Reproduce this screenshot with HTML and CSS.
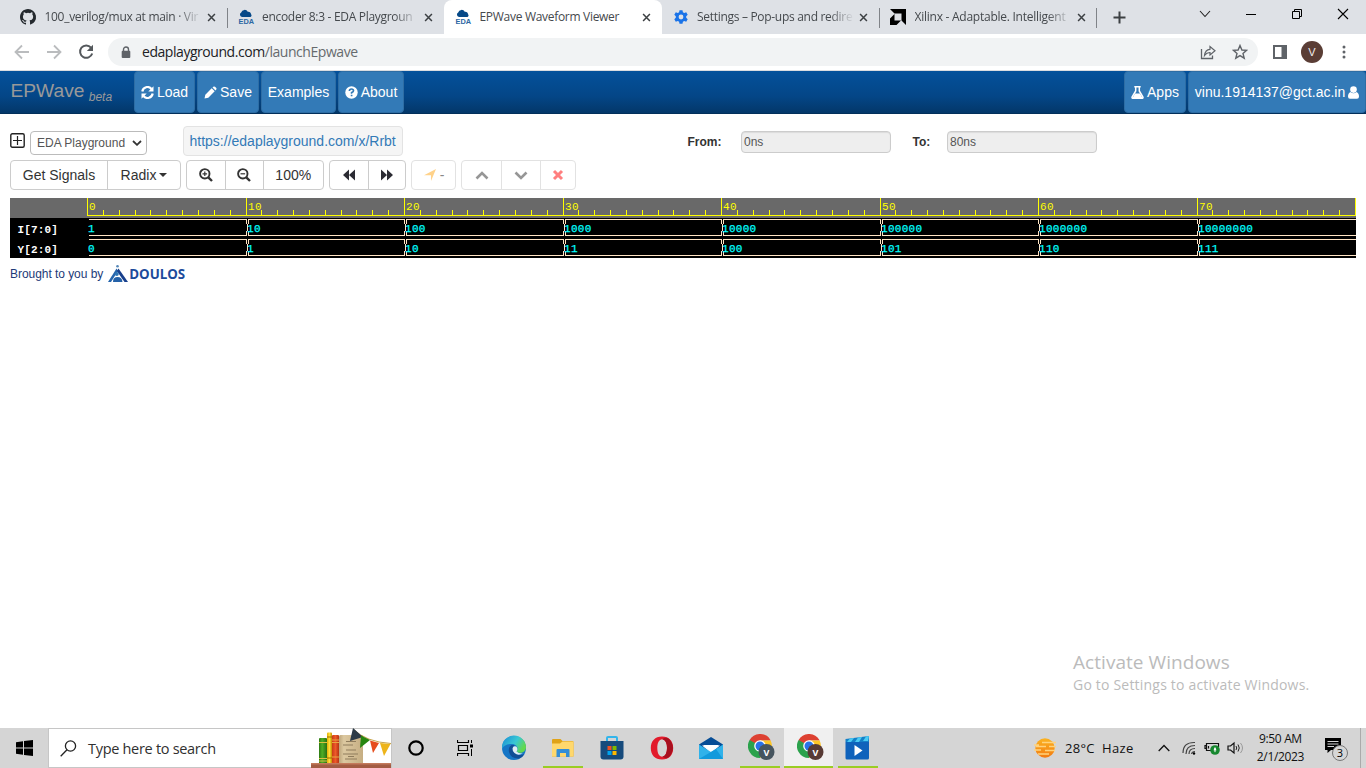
FILE: index.html
```html
<!DOCTYPE html>
<html lang="en">
<head>
<meta charset="utf-8">
<title>EPWave Waveform Viewer</title>
<link rel="stylesheet" href="styles.css">
</head>
<body>
<svg class="defs" width="18" height="18" aria-hidden="true">
  <symbol id="x" viewBox="0 0 10 10"><path d="M1.2 1.2L8.8 8.8M8.8 1.2L1.2 8.8" stroke="#3c4043" stroke-width="1.7" fill="none"/></symbol>
  <symbol id="cloud" viewBox="0 0 18 18">
    <path d="M4.5 9A2.8 2.8 0 0 1 3.6 3.8A4 4 0 0 1 11 3.2A3 3 0 0 1 14.7 6A1.8 1.8 0 0 1 14 9Z" fill="#064988"/>
  </symbol>
  <symbol id="chrome" viewBox="0 0 28 28">
    <path d="M12 6.5H22.6L22.4 6A12 12 0 0 0 1.6 6L6.9 14.5Z" fill="#dd4132"/>
    <path d="M12 12L1.6 6A12 12 0 0 0 12 24L17 15Z" fill="#2ba24c"/>
    <path d="M16.8 14.8L12 24A12 12 0 0 0 22.6 6.5H12Z" fill="#fcc626"/>
    <circle cx="12" cy="12" r="5.8" fill="#fff"/><circle cx="12" cy="12" r="4.5" fill="#2972e8"/>
  </symbol>
</svg>

<header class="tabs">
  <div class="tab"><svg class="fav" viewBox="0 0 16 16"><path fill="#24292e" d="M8 0C3.58 0 0 3.58 0 8c0 3.54 2.29 6.53 5.47 7.59.4.07.55-.17.55-.38v-1.49c-2.01.37-2.53-.49-2.69-.94-.09-.23-.48-.94-.82-1.13-.28-.15-.68-.52-.01-.53.63-.01 1.08.58 1.23.82.72 1.21 1.87.87 2.33.66.07-.52.28-.87.51-1.07-1.78-.2-3.64-.89-3.64-3.95 0-.87.31-1.59.82-2.15-.08-.2-.36-1.02.08-2.12 0 0 .67-.21 2.2.82a7.4 7.4 0 0 1 4 0c1.53-1.04 2.2-.82 2.2-.82.44 1.1.16 1.92.08 2.12.51.56.82 1.27.82 2.15 0 3.07-1.87 3.75-3.65 3.95.29.25.54.73.54 1.48v2.2c0 .21.15.46.55.38A8 8 0 0 0 8 0Z"/></svg><span class="title fade">100_verilog/mux at main · Vir</span><svg class="close"><use href="#x"/></svg></div>
  <div class="tab sep"><svg class="fav" viewBox="0 0 18 18"><use href="#cloud"/><text x=".6" y="17" class="eda" textLength="17.5" lengthAdjust="spacingAndGlyphs">EDA</text></svg><span class="title fade">encoder 8:3 - EDA Playgroun</span><svg class="close"><use href="#x"/></svg></div>
  <div class="tab active"><svg class="fav" viewBox="0 0 18 18"><use href="#cloud"/><text x=".6" y="17" class="eda" textLength="17.5" lengthAdjust="spacingAndGlyphs">EDA</text></svg><span class="title">EPWave Waveform Viewer</span><svg class="close"><use href="#x"/></svg></div>
  <div class="tab"><svg class="fav" viewBox="0 0 16 16"><path d="M6.5 1.2h3l.4 2 1.3.8 2-.7 1.5 2.5-1.5 1.4v1.6l1.5 1.4-1.5 2.5-2-.7-1.3.8-.4 2h-3l-.4-2-1.3-.8-2 .7-1.5-2.5 1.5-1.4V7.200L1.300 5.800l1.500-2.500 2 .7 1.300-.8Z" fill="#1a73e8"/><circle cx="8" cy="8" r="2.400" fill="#dee1e6"/></svg><span class="title fade">Settings – Pop-ups and redire</span><svg class="close"><use href="#x"/></svg></div>
  <div class="tab sep"><svg class="fav" viewBox="0 0 16 16"><path d="M0 0H16V16L11.500 11.500V4.500H4.500Z"/><path d="M4.500 5V11.500H11L6.500 16H0V9.500Z"/><path d="M5.500 5.500H10.500V10.500H5.500Z" fill="#dee1e6"/></svg><span class="title fade xil">Xilinx - Adaptable. Intelligent</span><svg class="close"><use href="#x"/></svg></div>
  <div class="newtab"><svg width="13" height="13"><path d="M6.500 .5v12M.5 6.500h12" stroke="#3c4043" stroke-width="2"/></svg></div>
  <div class="winbtns">
    <svg viewBox="0 0 12 12"><path d="M1 3L6 8.500L11 3" fill="none" stroke="#222" stroke-width="1.100"/></svg>
    <svg viewBox="0 0 12 12"><path d="M1 6.500H11" stroke="#000"/></svg>
    <svg viewBox="0 0 12 12"><path d="M1.500 3.500H8.500V10.500H1.500ZM3.500 3.500V1.500H10.500V8.500H8.500" fill="none" stroke="#000"/></svg>
    <svg viewBox="0 0 12 12"><path d="M1 1L11 11M11 1L1 11" stroke="#000" stroke-width="1.100"/></svg>
  </div>
</header>

<div class="toolbar">
  <svg class="nav" viewBox="0 0 16 16"><path d="M15 8H2M8 1.500L1.500 8L8 14.500" fill="none" stroke="#babcbe" stroke-width="1.800"/></svg>
  <svg class="nav" viewBox="0 0 16 16"><path d="M1 8H14M8 1.500L14.500 8L8 14.500" fill="none" stroke="#babcbe" stroke-width="1.800"/></svg>
  <svg class="nav" viewBox="0 0 16 16"><path d="M13 3.600A6.200 6.200 0 1 0 14.200 9.500" fill="none" stroke="#54585c" stroke-width="2"/><path d="M15 .8V7H8.800Z" fill="#54585c"/></svg>
  <div class="omnibox">
    <svg class="lock" viewBox="0 0 10 13"><path d="M2.500 6V3.500a2.500 2.500 0 0 1 5 0V6" fill="none" stroke="#5f6368" stroke-width="1.400"/><rect x=".7" y="4.800" width="8.600" height="7.200" rx="1" fill="#5f6368"/></svg>
    <span class="url">edaplayground.com<i>/launchEpwave</i></span>
    <svg class="share" viewBox="0 0 16 16"><path d="M1.500 5V14.500H12.500V11.500" fill="none" stroke="#5f6368" stroke-width="1.300"/><path d="M4.500 11.500C5 7.500 7 5.500 10 5.300V2.500L15 6.800L10 11V8.500C7.500 8.400 6 9.500 4.500 11.500Z" fill="none" stroke="#5f6368" stroke-width="1.200"/></svg>
    <svg class="star" viewBox="0 0 16 16"><path d="M8 1.500L9.900 6L14.600 6.300L11 9.500L12.200 14.200L8 11.600L3.800 14.200L5 9.500L1.400 6.300L6.100 6Z" fill="none" stroke="#5f6368" stroke-width="1.400"/></svg>
  </div>
  <svg class="panel" viewBox="0 0 14 14"><path d="M1 1H13V13H1Z" fill="none" stroke="#5f6368" stroke-width="2"/><path d="M8.500 0H14V14H8.500Z" fill="#5f6368"/></svg>
  <span class="avatar">V</span>
  <svg class="dots" viewBox="0 0 4 14"><g fill="#5f6368"><circle cx="2" cy="2" r="1.500"/><circle cx="2" cy="7" r="1.500"/><circle cx="2" cy="12" r="1.500"/></g></svg>
</div>

<nav class="navbar">
  <span class="brand">EPWave <em>beta</em></span>
  <a class="nb load"><svg viewBox="0 0 13 13"><path d="M1.300 5.500A5.200 5.200 0 0 1 10.500 3M11.700 7.500A5.200 5.200 0 0 1 2.500 10" fill="none" stroke="#fff" stroke-width="2.200"/><path d="M12.500 .3V5.500H7.300ZM.5 12.700V7.500H5.700Z" fill="#fff"/></svg>Load</a>
  <a class="nb save"><svg viewBox="0 0 13 13"><path d="M.5 12.500L1.300 8.700L7.700 2.300L10.700 5.300L4.300 11.700ZM8.500 1.500L9.700 .5Q10.300 .2 11 .8L12.300 2.100Q12.800 2.800 12.300 3.400L11.500 4.500Z" fill="#fff"/></svg>Save</a>
  <a class="nb examples">Examples</a>
  <a class="nb about"><svg viewBox="0 0 13 13"><circle cx="6.500" cy="6.500" r="6.200" fill="#fff"/><path d="M4.400 5Q4.500 3 6.500 3Q8.500 3 8.500 4.800Q8.500 6 6.600 6.600V7.700M6.600 8.700V10.300" fill="none" stroke="#337ab7" stroke-width="1.700"/></svg>About</a>
  <span class="grow"></span>
  <a class="nb apps"><svg viewBox="0 0 13 13"><path d="M3.300 .8H9.700M4.700 1V5L1.200 10.800Q.6 12.300 2 12.300H11Q12.400 12.300 11.800 10.800L8.300 5V1" fill="none" stroke="#fff" stroke-width="1.500"/><path d="M4 7.500H9L11.500 12H1.500Z" fill="#fff"/></svg>Apps</a>
  <a class="nb user">vinu.1914137@gct.ac.in<svg viewBox="0 0 11 13"><circle cx="5.500" cy="3.600" r="3.300" fill="#fff"/><path d="M2.500 6Q5.500 8.500 8.500 6Q11 7 11 10.500Q11 12.700 9 12.700H2Q0 12.700 0 10.500Q0 7 2.500 6Z" fill="#fff"/></svg></a>
</nav>

<main>
  <div class="row source">
    <svg class="plus" viewBox="0 0 15 15"><rect x=".8" y=".8" width="13.400" height="13.400" rx="1.500" fill="none" stroke="#222" stroke-width="1.400"/><path d="M7.500 3V12M3 7.500H12" stroke="#222" stroke-width="1.200"/></svg>
    <span class="select">EDA Playground<svg viewBox="0 0 10 6"><path d="M1 1L5 4.800L9 1" fill="none" stroke="#333" stroke-width="1.800"/></svg></span>
    <span class="link">https://edaplayground.com/x/Rrbt</span>
    <label class="from">From:</label><span class="field">0ns</span>
    <label class="to">To:</label><span class="field">80ns</span>
  </div>
  <div class="row buttons">
    <div class="group"><span class="w98">Get Signals</span><span class="w74">Radix<b class="caret"></b></span></div>
    <div class="group">
      <span class="w39"><svg viewBox="0 0 14 14"><circle cx="5.800" cy="5.800" r="4.700" fill="none" stroke="#333" stroke-width="1.900"/><path d="M9.300 9.300L13 13" stroke="#333" stroke-width="2.400"/><path d="M5.800 3.500V8.100M3.500 5.800H8.100" stroke="#333" stroke-width="1.200"/></svg></span>
      <span class="w38"><svg viewBox="0 0 14 14"><circle cx="5.800" cy="5.800" r="4.700" fill="none" stroke="#333" stroke-width="1.900"/><path d="M9.300 9.300L13 13" stroke="#333" stroke-width="2.400"/><path d="M3.500 5.800H8.100" stroke="#333" stroke-width="1.200"/></svg></span>
      <span class="w62">100%</span>
    </div>
    <div class="group">
      <span class="w38"><svg viewBox="0 0 14 14"><path d="M7 1.500V12.500L1 7ZM13 1.500V12.500L7 7Z" fill="#2b2b33"/></svg></span>
      <span class="w38"><svg viewBox="0 0 14 14"><path d="M1 1.500V12.500L7 7ZM7 1.500V12.500L13 7Z" fill="#2b2b33"/></svg></span>
    </div>
    <div class="group off"><span class="w45"><svg viewBox="0 0 14 14"><path d="M13 1L8 13V7.300L1 7.200Z" fill="#ffd28a"/></svg><i>-</i></span></div>
    <div class="group off">
      <span class="w40"><svg viewBox="0 0 14 14"><path d="M1.500 10.500L7 5L12.500 10.500" fill="none" stroke="#969696" stroke-width="2.600"/></svg></span>
      <span class="w40"><svg viewBox="0 0 14 14"><path d="M1.500 4.500L7 10L12.500 4.500" fill="none" stroke="#969696" stroke-width="2.600"/></svg></span>
      <span class="w37"><svg viewBox="0 0 14 14"><path d="M3 3L11 11M11 3L3 11" stroke="#ff7f7f" stroke-width="3"/></svg></span>
    </div>
  </div>
  <svg class="wave" id="wave" width="1346" height="60" shape-rendering="crispEdges"></svg>
  <footer class="credit"><span>Brought to you by</span>
    <svg width="78" height="20" viewBox="0 0 78 20"><circle cx="9.500" cy="2.200" r="1.300" fill="#5688b8"/><path d="M8.500 4.500L0 18H3L10 7Z" fill="#2565ad"/><path d="M10.500 4.500L20 18H16.500L8.800 7Z" fill="#173f8c"/><circle cx="8.800" cy="10" r="2" fill="#2e75b5"/><path d="M5 18Q5 13 9.500 13Q14 13 14.500 18Z" fill="#2461a8"/><text x="21.200" y="15.200" class="doulos" textLength="56" lengthAdjust="spacingAndGlyphs">DOULOS</text></svg>
  </footer>
  <aside class="activate"><div>Activate Windows</div><p>Go to Settings to activate Windows.</p></aside>
</main>

<div class="taskbar">
  <div class="start"><svg width="17" height="16" viewBox="0 0 17 16"><path d="M0 2.200L7 1.200V7.500H0ZM8 1L17 0V7.500H8ZM0 8.500H7V14.800L0 13.800ZM8 8.500H17V16L8 15Z"/></svg></div>
  <div class="search">
    <svg width="17" height="17" viewBox="0 0 17 17"><circle cx="10.500" cy="6" r="5.100" fill="none" stroke="#222" stroke-width="1.300"/><path d="M7 9.700L.7 16.200" stroke="#222" stroke-width="1.300"/></svg>
    <span>Type here to search</span>
    <svg class="art" width="80" height="40" viewBox="0 0 80 40">
      <defs><linearGradient id="gr"><stop offset="0" stop-color="#2c7a12"/><stop offset=".4" stop-color="#4fae26"/><stop offset="1" stop-color="#2a6f13"/></linearGradient><linearGradient id="ye"><stop offset="0" stop-color="#e5ae04"/><stop offset=".5" stop-color="#ffdf3b"/><stop offset="1" stop-color="#c48b02"/></linearGradient><linearGradient id="re"><stop offset="0" stop-color="#c93a16"/><stop offset=".5" stop-color="#ee5a2a"/><stop offset="1" stop-color="#b53112"/></linearGradient><linearGradient id="pa"><stop offset="0" stop-color="#bca57c"/><stop offset=".2" stop-color="#dcc8a0"/><stop offset="1" stop-color="#c6ae83"/></linearGradient></defs>
      <rect x="8" y="10" width="8" height="26" rx="1" fill="url(#gr)"/><path d="M8 14.500H16M8 30.500H16M8 33H16" stroke="#dbc142"/>
      <rect x="16" y="4.500" width="5" height="31" rx="1" fill="url(#ye)"/><path d="M16 9H21M16 30H21" stroke="#9a6a00"/>
      <rect x="21" y="7" width="7" height="28.500" rx="1" fill="url(#re)"/><path d="M21 12H28M21 14.500H28M21 29H28" stroke="#e9a640"/>
      <rect x="28" y="7" width="24" height="29" rx="1.500" fill="url(#pa)"/><path d="M35 13.500H45M32 17H42M35 22H45M32 26H47M37 28.500H43M34 31H46" stroke="#8f7c5c"/>
      <path d="M42 1Q55 14 80 15.500" fill="none" stroke="#c7a34a"/><path d="M42 0L52 9L39 13Z" fill="#2d3b48"/><path d="M50 7.500L59 12L49 20Z" fill="#278611"/><path d="M59 12.500L68 15L62 25Z" fill="#e64d1c"/><path d="M69 15L79.500 16L73 28Z" fill="#edb41b"/>
      <rect y="35.500" width="80" height="4.500" fill="#a35c43"/><rect y="35" width="80" height="1.500" fill="#c47a5c"/>
    </svg>
  </div>
  <div class="apps-row">
    <span><svg width="18" height="18" viewBox="0 0 18 18"><circle cx="9" cy="9" r="6.700" fill="none" stroke="#000" stroke-width="2.200"/></svg></span>
    <span><svg width="17" height="16" viewBox="0 0 17 16"><path d="M.5 0V2.500H11.500V0M1.500 5.500H10.500V10.500H1.500ZM.5 16V13.500H11.500V16" fill="none" stroke="#000" stroke-width="1.200"/><path d="M14.500 0V3M14.500 9V16" stroke="#000"/><path d="M13 4.500H16V7.500H13Z"/></svg></span>
    <span><svg width="26" height="26" viewBox="0 0 26 26"><defs><linearGradient id="eg" x1="0" y1="0" x2="1" y2=".5"><stop offset="0" stop-color="#198ad5"/><stop offset=".6" stop-color="#39c8d4"/><stop offset="1" stop-color="#62d94e"/></linearGradient></defs><circle cx="13" cy="13" r="12" fill="#1676c6"/><path d="M1 13A12 12 0 0 1 25 12C25 18 18 19 15.500 16.500C18 14 16 9 11 9C6 9 2 11 1 14Z" fill="url(#eg)"/><path d="M10.500 10Q7 12 8 17Q10 24 18 23.500Q21.500 22.500 23.500 19Q18 21.500 14 18Q10.500 14 13.500 10Z" fill="#124f96"/><path d="M11.500 13.500Q12 10.500 15.300 11.500Q17.500 14 15.500 16.500Q18 19 22 18.500Q17 21 13.500 18Q11.300 16 11.500 13.500Z" fill="#dfedf4"/></svg></span>
    <span class="run"><svg width="22" height="20" viewBox="0 0 22 20"><path d="M0 2Q0 1 1 1H8.500L10.500 3H20.500Q21.500 3 21.500 4V18.500H0Z" fill="#e0a318"/><path d="M0 5.500H8L10.500 3.500H21.500V18.500H0Z" fill="#ffd86d"/><path d="M4.500 19V12Q4.500 11 5.500 11H16.500Q17.500 11 17.500 12V19H14V15H8V19Z" fill="#348ed6"/></svg></span>
    <span><svg width="24" height="24" viewBox="0 0 24 24"><path d="M7 5V2Q7 1 8 1H16Q17 1 17 2V5" fill="none" stroke="#33b5eb" stroke-width="2"/><path d="M.5 5H23.500V20.500Q23.500 23.500 20.500 23.500H3.500Q.5 23.500 .5 20.500Z" fill="#174b7c"/><path d="M7.500 10H11.500V14H7.500Z" fill="#f25022"/><path d="M12.500 10H16.500V14H12.500Z" fill="#7fba00"/><path d="M7.500 15H11.500V19H7.500Z" fill="#00a4ef"/><path d="M12.500 15H16.500V19H12.500Z" fill="#ffb900"/></svg></span>
    <span><svg width="24" height="24" viewBox="0 0 24 24"><path fill-rule="evenodd" fill="#e21b2c" d="M12 .5C19 .5 23.200 5 23.200 12S19 23.500 12 23.500S.8 19 .8 12S5 .5 12 .5ZM12.300 3.300C9 3.300 7.300 7 7.300 12S9 20.700 12.300 20.700C15 20.700 17 17 17 12S15 3.300 12.300 3.300Z"/><path d="M12.300 3.300Q17.500 -.5 21 5.500Q25 12 21 18.500Q17.500 24.500 12.300 20.700Q17 19.500 17 12Q17 4.500 12.300 3.300Z" fill="#a8101f"/></svg></span>
    <span><svg width="24" height="24" viewBox="0 0 24 24"><path d="M0 8.500L12 1L24 8.500V14H0Z" fill="#064d96"/><path d="M3 9.500H21L12 17Z" fill="#f7f9fb"/><path d="M0 8.500L12 16L24 8.500V23H0Z" fill="#30b2ea"/><path d="M0 23L17 13L24 23Z" fill="#129adc"/><path d="M4 9H20L12 15Z" fill="#fff"/></svg></span>
    <span class="run"><svg class="browser" width="28" height="28"><use href="#chrome"/><circle cx="18.500" cy="18" r="8" fill="#46555f"/><text x="18.500" y="21.500" class="badge">V</text></svg></span>
    <span class="run current"><svg class="browser" width="28" height="28"><use href="#chrome"/><circle cx="18.500" cy="18" r="8" fill="#573a34"/><text x="18.500" y="21.500" class="badge">V</text></svg></span>
    <span class="run"><svg width="25" height="24" viewBox="0 0 25 24"><path d="M.5 3L24 0V6H.5Z" fill="#1480c8"/><path d="M5 2.500L9 2L6 6H2ZM13 1.500L17 1L14 6H10ZM21 .5L24 0L23 5H18Z" fill="#4acbf4"/><path d="M.5 6H24V22Q24 23.500 22.500 23.500H2Q.5 23.500 .5 22Z" fill="#0f62bb"/><path d="M9.500 9L17.500 14.500L9.500 20Z" fill="#fff"/></svg></span>
  </div>
  <div class="tray">
    <svg class="haze" width="24" height="20" viewBox="0 0 24 20"><defs><linearGradient id="sun" x1="0" y1="0" x2="0" y2="1"><stop offset="0" stop-color="#fbb321"/><stop offset="1" stop-color="#f27b12"/></linearGradient></defs><circle cx="12" cy="10" r="9.700" fill="url(#sun)"/><path d="M1 7H6M9 4.500H23M3 8.500H13M16 8.500H23M1 12H8M12 12.500H22M5 16H16" stroke="#ffd37d" stroke-width="1.300"/></svg>
    <span class="weather">28°C&nbsp; Haze</span>
    <svg class="chev" width="12" height="8" viewBox="0 0 12 8"><path d="M.7 7L6 1.500L11.300 7" fill="none" stroke="#111" stroke-width="1.300"/></svg>
    <svg class="wifi" width="14" height="14" viewBox="0 0 14 14"><g fill="none" stroke="#444" stroke-width="1.200"><path d="M1 12Q1 1 13 1.500"/><path d="M4 13Q4 4.500 13 4.500"/><path d="M7 13Q7 7.500 13 7.500"/><path d="M9.500 13Q10 10.500 13 10.500"/></g><circle cx="12" cy="12.500" r="1.200"/></svg>
    <svg class="batt" width="16" height="14" viewBox="0 0 16 14"><path d="M8 9.500H2.500V2.500H14.500V6M2.500 4.500H1V7.500H2.500M4.500 5V7.500" fill="none" stroke="#111" stroke-width="1.200"/><circle cx="11" cy="9" r="4.800" fill="#16872e"/><path d="M11 11.500Q8.500 9 11 6Q13.500 9 11 11.500Z" fill="#fff"/><path d="M11 12V9" stroke="#16872e" stroke-width=".7"/></svg>
    <svg class="vol" width="17" height="14" viewBox="0 0 17 14"><path d="M1 5H3.500L7 2V12L3.500 9H1Z" fill="none" stroke="#111" stroke-width="1.200"/><path d="M9 5Q10.500 7 9 9M11 3.500Q13.500 7 11 10.500" fill="none" stroke="#222"/><path d="M13.500 2Q17.500 7 13.500 12" fill="none" stroke="#999"/></svg>
    <span class="clock"><span>9:50 AM</span><span>2/1/2023</span></span>
    <svg class="note" width="26" height="26" viewBox="0 0 26 26"><path d="M1 3H17V15H7L3.500 18V15H1Z"/><path d="M3.500 6.500H14.500M3.500 9H14.500M3.500 11.500H10" stroke="#d4d4d4"/><circle cx="16" cy="18" r="7.500" fill="#d6d6d6" stroke="#777"/><text x="16" y="22" class="count">3</text></svg>
    <i class="peek"></i>
  </div>
</div>
<script src="wave.js"></script>
</body>
</html>
```
FILE: styles.css
```css
* { box-sizing: border-box; }
body { margin: 0; width: 1366px; height: 768px; overflow: hidden; display: flex; flex-direction: column; background: #fff; font-family: "Liberation Sans", Arial, sans-serif; color: #333; }
svg { flex: none; display: block; }
.defs { position: absolute; }

/* browser tabs */
.tabs { display: flex; height: 34px; flex: none; padding-left: 9px; background: #dee1e6; font-family: "Open Sans", sans-serif; font-size: 12px; color: #45494d; }
.tab { width: 217.5px; flex: none; display: flex; align-items: center; padding-left: 11px; }
.tab.sep { background: linear-gradient(#808388, #808388) 0 8px / 1px 20px no-repeat, linear-gradient(#808388, #808388) 100% 8px / 1px 20px no-repeat; }
.tab.sep:nth-child(2) { background: linear-gradient(#808388, #808388) 0 8px / 1px 20px no-repeat; }
.tab.active { background: #fff; border-radius: 8px 8px 0 0; }
.fav { width: 16px; height: 16px; overflow: visible; }
.eda { font: 700 8.5px "Liberation Sans", sans-serif; fill: #2d68a3; }
.title { width: 157px; margin-left: 8.5px; flex: none; white-space: nowrap; line-height: 18px; letter-spacing: -.3px; }
.xil { letter-spacing: -.25px; }
.fade { -webkit-mask-image: linear-gradient(90deg, #000 84%, transparent 100%); mask-image: linear-gradient(90deg, #000 84%, transparent 100%); }
.close { width: 9px; height: 9px; margin-left: 5px; }
.newtab { width: 44px; padding: 11px 0 0 16px; }
.winbtns { display: flex; gap: 34px; margin-left: 58px; padding-top: 8px; }
.winbtns svg { width: 12px; height: 12px; }

.toolbar { display: flex; align-items: center; height: 37px; flex: none; padding-left: 14px; border-bottom: 1px solid #dadce0; }
.nav { width: 16px; height: 16px; margin-right: 16px; }
.omnibox { display: flex; align-items: center; width: 1150px; height: 28px; margin-left: -2px; border-radius: 14px; background: #f1f3f4; }
.lock { width: 10px; height: 13px; margin-left: 13px; }
.url { width: 1040px; margin-left: 11px; margin-top: -1px; font: 14px "Open Sans", sans-serif; letter-spacing: -.45px; color: #202124; }
.url i { font-style: normal; color: #666a6e; }
.share { width: 16px; height: 16px; margin-left: 18px; }
.star { width: 16px; height: 16px; margin-left: 16px; }
.panel { width: 14px; height: 14px; margin-left: 15px; }
.avatar { width: 22px; height: 22px; margin-left: 14px; border-radius: 50%; background: #5a3d35; color: #f4eeee; font-size: 11px; line-height: 22px; text-align: center; }
.dots { width: 4px; height: 14px; margin-left: 19px; }

/* application bar */
.navbar { display: flex; height: 43px; flex: none; padding-left: 10.500px; background: linear-gradient(#04519b, #044687 60%, #033769); border-bottom: 1px solid #022f5a; }
.brand { width: 123.500px; padding-top: 8px; font-size: 19.200px; line-height: 24px; color: #999; white-space: nowrap; }
.brand em { position: relative; top: 4px; font-size: 12px; margin-left: -1px; }
.nb { display: flex; align-items: center; justify-content: center; height: 42px; margin-right: 2px; border: 1px solid #2e6da4; border-radius: 4px; background: #337ab7; color: #fff; font-size: 14px; }
.nb svg { width: 13px; height: 13px; margin-right: 3px; }
.load { width: 61px; }
.save { width: 62px; }
.examples { width: 75px; }
.about { width: 66px; }
.grow { flex: 1; }
.apps { width: 62px; }
.user { width: 178px; margin-right: 0; }
.user svg { width: 11px; margin: 0 0 0 3px; }

main { flex: 1; position: relative; padding: 12px 10px 0; }
.row { display: flex; }
.source { height: 30px; }
.plus { width: 15px; height: 15px; margin-top: 7px; }
.select { display: flex; align-items: center; justify-content: space-between; width: 117px; height: 24px; margin: 5px 0 0 5px; padding: 0 4px 0 6px; border: 1px solid #bbb; border-radius: 4px; color: #555; font-size: 12px; }
.select svg { width: 10px; height: 6px; }
.link { width: 220px; height: 30px; margin-left: 36px; padding-left: 5.500px; border: 1px solid #e3e3e3; border-radius: 4px; background: #f5f5f5; color: #337ab7; font-size: 14px; line-height: 28px; }
.source label { font-size: 12px; font-weight: 700; line-height: 14px; margin-top: 9px; }
.from { width: 53px; margin-left: 284.500px; }
.to { width: 34px; margin-left: 22px; }
.field { width: 150px; height: 22px; margin-top: 5px; padding-left: 2.500px; border: 1px solid #ccc; border-radius: 4px; background: #eee; box-shadow: inset 0 1px 1px rgba(0,0,0,.08); color: #555; font-size: 12px; line-height: 20px; }
.buttons { gap: 5px; margin-top: 4px; height: 30px; }
.group { display: flex; border: 1px solid #ccc; border-radius: 4px; }
.group > span { display: flex; align-items: center; justify-content: center; font-size: 14px; }
.group > span + span { border-left: 1px solid #ccc; }
.group svg { width: 14px; height: 14px; }
.off, .off > span + span { border-color: #e2e2e2 !important; }
.off i { margin-left: 3px; color: #888; font-style: normal; }
.w98 { width: 96px; }
.w74 { width: 73px; }
.w39 { width: 38px; }
.w38 { width: 37.500px; }
.w62 { width: 60.500px; }
.w45 { width: 43px; }
.w40 { width: 39px; }
.w37 { width: 35px; }
.caret { margin-left: 3px; border: 4px solid transparent; border-top-color: #333; border-bottom: 0; }
.wave { margin-top: 8px; }
.wave text { font: 700 11px "Liberation Mono", monospace; letter-spacing: .3px; }
.wave .name { letter-spacing: .15px; }
.wave .value { font-weight: 400; stroke: #0ff; stroke-width: .25px; }
.wave .tick { font-weight: 400; }
.credit { display: flex; align-items: center; margin-top: 6px; font-size: 12px; letter-spacing: -.05px; color: #1d3a78; }
.credit svg { margin-left: 5px; }
.doulos { font: 700 14px "Open Sans", sans-serif; letter-spacing: 0; fill: #1d4b9b; }
.activate { position: absolute; left: 1073px; top: 536px; color: #bbb; font-family: "Open Sans", sans-serif; white-space: nowrap; }
.activate div { font-size: 19px; line-height: 24px; letter-spacing: .05px; }
.activate p { margin: 0; font-size: 14px; line-height: 22px; letter-spacing: .2px; }

/* desktop taskbar */
.taskbar { display: flex; height: 40px; flex: none; background: #d5d5d5; font-family: "Open Sans", sans-serif; color: #111; }
.start { width: 48px; padding: 12px 0 0 16px; }
.search { display: flex; align-items: center; width: 344px; border: 1px solid #c6c6c6; background: #fff; padding-left: 11px; }
.search span { width: 210px; margin-left: 11px; font-size: 14.5px; letter-spacing: -.3px; white-space: nowrap; color: #303030; }
.art { margin-left: 15px; }
.apps-row { display: grid; grid-template-columns: repeat(10, 49.1px); margin-left: -.5px; }
.apps-row span { display: flex; align-items: center; justify-content: center; }
.run { background: linear-gradient(#9acd24, #9acd24) 50% 100% / 40px 2px no-repeat; }
.current { background: linear-gradient(#9acd24, #9acd24) 0 100% / 100% 2px no-repeat, #f0f0f0; }
.browser { margin-left: 4px; }
.badge { font: 700 9px "Open Sans", sans-serif; fill: #fff; text-anchor: middle; }
.tray { flex: 1; display: flex; align-items: center; padding-left: 150.5px; }
.weather { width: 70px; margin-left: 8px; font-size: 13px; letter-spacing: .3px; white-space: nowrap; }
.chev { margin-left: 23.500px; }
.wifi { margin-left: 12px; }
.batt { margin-left: 8px; }
.vol { margin-left: 7px; }
.clock { display: flex; flex-direction: column; align-items: center; width: 56px; margin-left: 8px; font-size: 12px; line-height: 18px; letter-spacing: -.35px; white-space: nowrap; }
.note { margin-left: 15.500px; }
.count { font: 11px "Open Sans", sans-serif; text-anchor: middle; }
.peek { width: 1px; height: 40px; margin-left: 10px; background: #aaa; }
```
FILE: wave.js
```js
const svg = document.getElementById('wave');
const at = t => Math.floor(77.5 + 15.85 * t + 1e-6);
const rect = (x, y, w, h, fill) => `<rect x="${x}" y="${y}" width="${w}" height="${h}" fill="${fill}"/>`;
const text = (x, y, s, fill, cls) => `<text x="${x}" y="${y}" fill="${fill}" class="${cls}">${s}</text>`;
const line = '#ffe4c4';
const signals = [
  ['I[7:0]', ['1', '10', '100', '1000', '10000', '100000', '1000000', '10000000']],
  ['Y[2:0]', ['0', '1', '10', '11', '100', '101', '110', '111']]
];
let out = rect(0, 0, 1346, 60, '#000') + rect(0, 0, 1346, 20, '#696969');
out += rect(77, 17, 1269, 1, '#ff0');
for (let t = 0; t <= 80; t++) {
  const major = t % 10 === 0;
  out += rect(at(t), major ? 0 : 12, 1, major ? 18 : 6, '#ff0');
  if (major && t < 80) out += text(at(t) + 2, 12, t, '#ff0', 'tick');
}
signals.forEach(([name, values], row) => {
  const y = 21 + row * 20;
  out += text(7.5, y + 14, name, '#fff', 'name');
  values.forEach((value, i) => {
    const a = at(i * 10) + 2;
    const b = at(i * 10 + 10);
    out += rect(a, y, b - a + 1, 1, line) + rect(a, y + 16, b - a + 1, 1, line);
    if (i) {
      out += rect(a, y, 1, 5, line) + rect(a, y + 12, 1, 5, line);
      out += rect(a - 2, y, 1, 5, line) + rect(a - 2, y + 12, 1, 5, line);
      out += rect(a - 1, y + 5, 1, 7, line);
    }
    out += text(at(i * 10) + 1, y + 13, value, '#0ff', 'value');
  });
});
svg.innerHTML = out;
```
